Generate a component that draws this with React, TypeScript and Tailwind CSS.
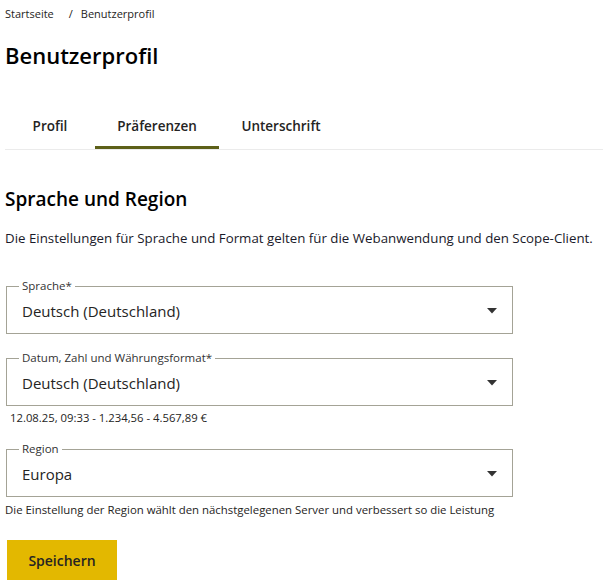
import React from "react";

const font = { fontFamily: '"Open Sans", "Noto Sans", sans-serif' };

function Arrow() {
  return (
    <svg width="10" height="6" viewBox="0 0 10 6" className="shrink-0">
      <path d="M0 0 L10 0 L5 5.5 Z" fill="#333333" />
    </svg>
  );
}

function Select({ label, value }: { label: string; value: string }) {
  return (
    <div className="relative w-[507px] h-[48px] ml-[1px] border border-[#a4a396]">
      <span className="absolute left-[12px] -top-[8px] bg-white px-[3px] text-[11.5px] leading-[14px] text-[#333]">{label}</span>
      <div className="flex items-center justify-between h-full pl-[15px] pr-[15px] pt-[1px]">
        <span className="text-[15px] text-[#252423] leading-[20px]">{value}</span>
        <Arrow />
      </div>
    </div>
  );
}

export default function App() {
  return (
    <div className="w-[603px] h-[587px] bg-white text-[#252423] overflow-hidden" style={font}>
      <div className="pl-[5px]">
        <div className="flex items-center h-[28px] text-[11px] pt-[1px]">
          <span>Startseite</span>
          <span className="ml-[15px] mr-[8px]">/</span>
          <span>Benutzerprofil</span>
        </div>
        <h1 className="text-[22px] font-semibold leading-[32px] mt-[11px] text-black">Benutzerprofil</h1>
        <div className="mt-[36px] flex border-b border-[#ebebeb] h-[43px]">
          <div className="w-[90px] flex items-start justify-center pt-[9px] text-[13.5px] font-semibold">Profil</div>
          <div className="w-[124px] flex items-start justify-center pt-[9px] text-[13.5px] font-semibold border-b-[3px] border-[#5d6019]">Präferenzen</div>
          <div className="w-[124px] flex items-start justify-center pt-[9px] text-[13.5px] font-semibold">Unterschrift</div>
        </div>
        <h2 className="text-[19px] font-semibold leading-[26px] mt-[36px] text-black">Sprache und Region</h2>
        <p className="text-[13.3px] leading-[18px] mt-[17px] text-[#1a1a2a]">
          Die Einstellungen für Sprache und Format gelten für die Webanwendung und den Scope-Client.
        </p>
        <div className="mt-[39px]">
          <Select label="Sprache*" value="Deutsch (Deutschland)" />
        </div>
        <div className="mt-[24px]">
          <Select label="Datum, Zahl und Währungsformat*" value="Deutsch (Deutschland)" />
        </div>
        <div className="text-[11.3px] leading-[14px] mt-[5px] pl-[5px]">12.08.25, 09:33 - 1.234,56 - 4.567,89 €</div>
        <div className="mt-[24px]">
          <Select label="Region" value="Europa" />
        </div>
        <div className="text-[11.4px] leading-[14px] mt-[6px]">
          Die Einstellung der Region wählt den nächstgelegenen Server und verbessert so die Leistung
        </div>
        <button className="mt-[23px] ml-[2px] w-[110px] h-[40px] bg-[#e3b800] text-[14px] font-semibold text-[#252423] flex items-center justify-center">
          Speichern
        </button>
      </div>
    </div>
  );
}
